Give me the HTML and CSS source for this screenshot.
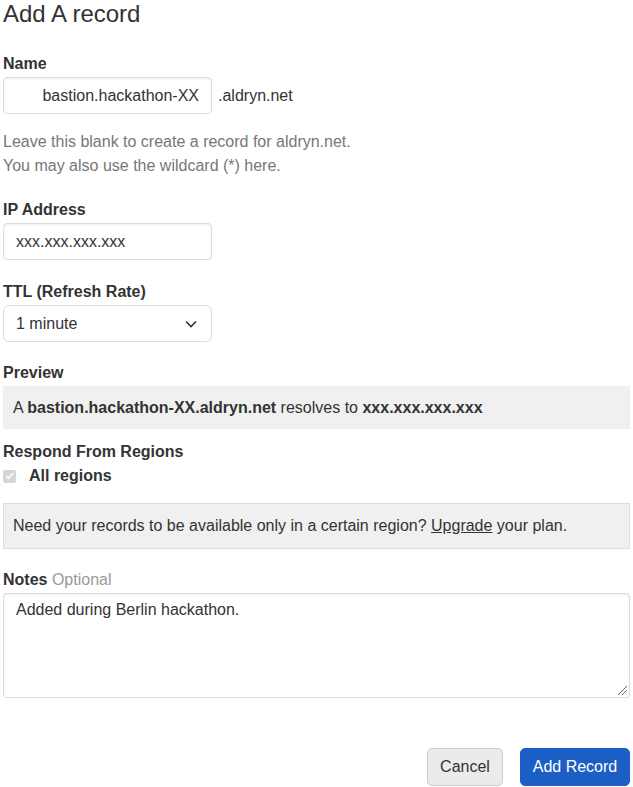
FILE: index.html
```html
<!DOCTYPE html>
<html>
<head>
<meta charset="utf-8">
<link rel="stylesheet" href="styles.css">
</head>
<body>
<form class="form">
  <h1 class="title">Add A record</h1>

  <div class="group g-name">
    <label class="label">Name</label>
    <div class="name-row">
      <input class="input input-right" type="text" value="bastion.hackathon-XX">
      <span class="suffix">.aldryn.net</span>
    </div>
    <p class="help">Leave this blank to create a record for aldryn.net.<br>You may also use the wildcard (*) here.</p>
  </div>

  <div class="group g-ip">
    <label class="label">IP Address</label>
    <input class="input" type="text" value="xxx.xxx.xxx.xxx">
  </div>

  <div class="group g-ttl">
    <label class="label">TTL (Refresh Rate)</label>
    <div class="select">
      <span>1 minute</span>
      <svg class="chevron" width="12" height="8" viewBox="0 0 12 8"><path d="M1 1.5 L6 6.5 L11 1.5" fill="none" stroke="#333" stroke-width="1.6"/></svg>
    </div>
  </div>

  <div class="group g-preview">
    <label class="label">Preview</label>
    <div class="preview">A <b>bastion.hackathon-XX.aldryn.net</b> resolves to <b>xxx.xxx.xxx.xxx</b></div>
  </div>

  <div class="group g-regions">
    <label class="label">Respond From Regions</label>
    <div class="check-row">
      <span class="checkbox"><svg width="9" height="8" viewBox="0 0 9 8"><path d="M1 4 L3.5 6.5 L8 1" fill="none" stroke="#fff" stroke-width="1.5"/></svg></span>
      <span class="check-label">All regions</span>
    </div>
  </div>

  <div class="notice">Need your records to be available only in a certain region? <a href="#" class="link">Upgrade</a> your plan.</div>

  <div class="group g-notes">
    <label class="label">Notes <span class="optional">Optional</span></label>
    <div class="textarea">Added during Berlin hackathon.<span class="grip"></span></div>
  </div>

  <div class="actions">
    <button type="button" class="btn btn-default">Cancel</button>
    <button type="button" class="btn btn-primary">Add Record</button>
  </div>
</form>
</body>
</html>
```
FILE: styles.css
```css
html, body {
  margin: 0;
  padding: 0;
  background: #fff;
}
body {
  padding: 0 3px;
  font-family: "Liberation Sans", Arial, sans-serif;
  font-size: 16px;
  color: #333;
}
.form {
  display: flex;
  flex-direction: column;
}
.title {
  font-size: 24px;
  font-weight: normal;
  margin: 0;
  line-height: 28px;
  color: #333;
}
.group {
  display: flex;
  flex-direction: column;
}
.label {
  font-weight: bold;
  font-size: 16px;
  line-height: 20px;
  margin-bottom: 3px;
}
.g-name { margin-top: 26px; }
.g-ip { margin-top: 22px; }
.g-ttl { margin-top: 22px; }
.g-preview { margin-top: 21px; }
.g-regions { margin-top: 13px; }
.g-notes { margin-top: 21px; }
.name-row {
  display: flex;
  align-items: center;
  gap: 6px;
}
.input {
  box-sizing: border-box;
  width: 209px;
  height: 37px;
  border: 1px solid #ddd;
  border-radius: 4px;
  box-shadow: inset 0 1px 2px rgba(0,0,0,0.08);
  font-family: "Liberation Sans", Arial, sans-serif;
  font-size: 16px;
  color: #333;
  padding: 0 12px;
  margin: 0;
  outline: none;
}
.input-right { text-align: right; }
.suffix { color: #333; }
.help {
  margin: 16px 0 0;
  color: #777;
  line-height: 24px;
}
.select {
  box-sizing: border-box;
  width: 209px;
  height: 37px;
  border: 1px solid #ddd;
  border-radius: 6px;
  padding: 0 12px 0 12px;
  display: flex;
  align-items: center;
  justify-content: space-between;
}
.chevron { margin-right: 2px; }
.preview {
  background: #f0f0f0;
  height: 43px;
  display: flex;
  align-items: center;
  padding: 0 10px;
  box-sizing: border-box;
  white-space: pre;
}
.check-row {
  display: flex;
  align-items: center;
  gap: 13px;
  margin-top: 1px;
}
.checkbox {
  width: 13px;
  height: 13px;
  background: #d5d5d5;
  border-radius: 2px;
  display: flex;
  align-items: center;
  justify-content: center;
}
.check-label {
  font-weight: bold;
  line-height: 20px;
}
.notice {
  margin-top: 17px;
  background: #f0f0f0;
  border: 1px solid #ddd;
  height: 46px;
  box-sizing: border-box;
  display: flex;
  align-items: center;
  padding: 0 9px;
  white-space: pre;
}
.link {
  color: #333;
  text-decoration: underline;
}
.optional {
  font-weight: normal;
  color: #999;
}
.textarea {
  position: relative;
  box-sizing: border-box;
  height: 105px;
  border: 1px solid #ddd;
  border-radius: 3px;
  box-shadow: inset 0 1px 2px rgba(0,0,0,0.08);
  padding: 6px 12px;
  line-height: 20px;
}
.grip {
  position: absolute;
  right: 2px;
  bottom: 2px;
  width: 9px;
  height: 9px;
  background: linear-gradient(135deg, transparent 45%, #666 45%, #666 52%, transparent 52%, transparent 70%, #666 70%, #666 77%, transparent 77%);
}
.actions {
  margin-top: 50px;
  display: flex;
  justify-content: flex-end;
  gap: 17px;
}
.btn {
  height: 38px;
  border-radius: 5px;
  font-family: "Liberation Sans", Arial, sans-serif;
  font-size: 16px;
  padding: 0;
  white-space: nowrap;
  cursor: pointer;
}
.btn-default {
  background: #ebebeb;
  border: 1px solid #ccc;
  color: #333;
  width: 76px;
}
.btn-primary {
  background: #1b5fc6;
  border: 1px solid #1b5fc6;
  color: #fff;
  width: 110px;
}
```
